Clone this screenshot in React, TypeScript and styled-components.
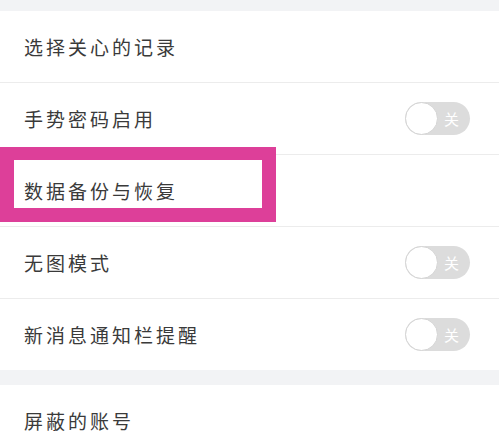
import React from 'react';
import { styled, createGlobalStyle } from 'styled-components';

const GlobalStyle = createGlobalStyle`
  html, body {
    margin: 0;
    padding: 0;
    background: #f2f3f5;
  }
  body {
    font-family: "Noto Sans CJK SC", "Noto Sans", sans-serif;
  }
`;

const Page = styled.div`
  position: relative;
  width: 499px;
  height: 438px;
  overflow: hidden;
  background: #f2f3f5;
`;

const Group = styled.div<{ $gap: number }>`
  margin-top: ${(p) => p.$gap}px;
  background: #fff;
`;

const Row = styled.div<{ $last?: boolean }>`
  display: flex;
  align-items: center;
  justify-content: space-between;
  height: 71px;
  padding: 0 29px 0 24px;
  border-bottom: ${(p) => (p.$last ? 'none' : '1px solid #ececec')};
`;

const Label = styled.span`
  font-size: 19px;
  letter-spacing: 3px;
  color: #3a3a3a;
`;

const Toggle = styled.div`
  position: relative;
  width: 65px;
  height: 33px;
  border-radius: 17px;
  background: #dcdcdc;
  display: flex;
  align-items: center;
  justify-content: flex-end;
  padding-right: 11px;
  box-sizing: border-box;
`;

const Knob = styled.div`
  position: absolute;
  left: 0;
  top: 0;
  width: 33px;
  height: 33px;
  border-radius: 50%;
  background: #fff;
  box-sizing: border-box;
  border: 1px solid #d4d4d4;
`;

const ToggleText = styled.span`
  font-size: 15px;
  color: #fff;
`;

const Highlight = styled.div`
  position: absolute;
  left: 0;
  top: 147px;
  width: 276px;
  height: 75px;
  box-sizing: border-box;
  border: 14px solid #dd3f99;
  border-top-width: 13px;
  border-bottom-width: 14px;
`;

type Item = { label: string; toggle?: boolean };

const first: Item[] = [
  { label: '选择关心的记录' },
  { label: '手势密码启用', toggle: true },
  { label: '数据备份与恢复' },
  { label: '无图模式', toggle: true },
  { label: '新消息通知栏提醒', toggle: true },
];

const second: Item[] = [{ label: '屏蔽的账号' }];

function Switch() {
  return (
    <Toggle>
      <Knob />
      <ToggleText>关</ToggleText>
    </Toggle>
  );
}

export default function App() {
  return (
    <Page>
      <GlobalStyle />
      <Group $gap={11}>
        {first.map((it, i) => (
          <Row key={it.label} $last={i === first.length - 1}>
            <Label>{it.label}</Label>
            {it.toggle && <Switch />}
          </Row>
        ))}
      </Group>
      <Group $gap={15}>
        {second.map((it) => (
          <Row key={it.label} $last>
            <Label>{it.label}</Label>
          </Row>
        ))}
      </Group>
      <Highlight />
    </Page>
  );
}
